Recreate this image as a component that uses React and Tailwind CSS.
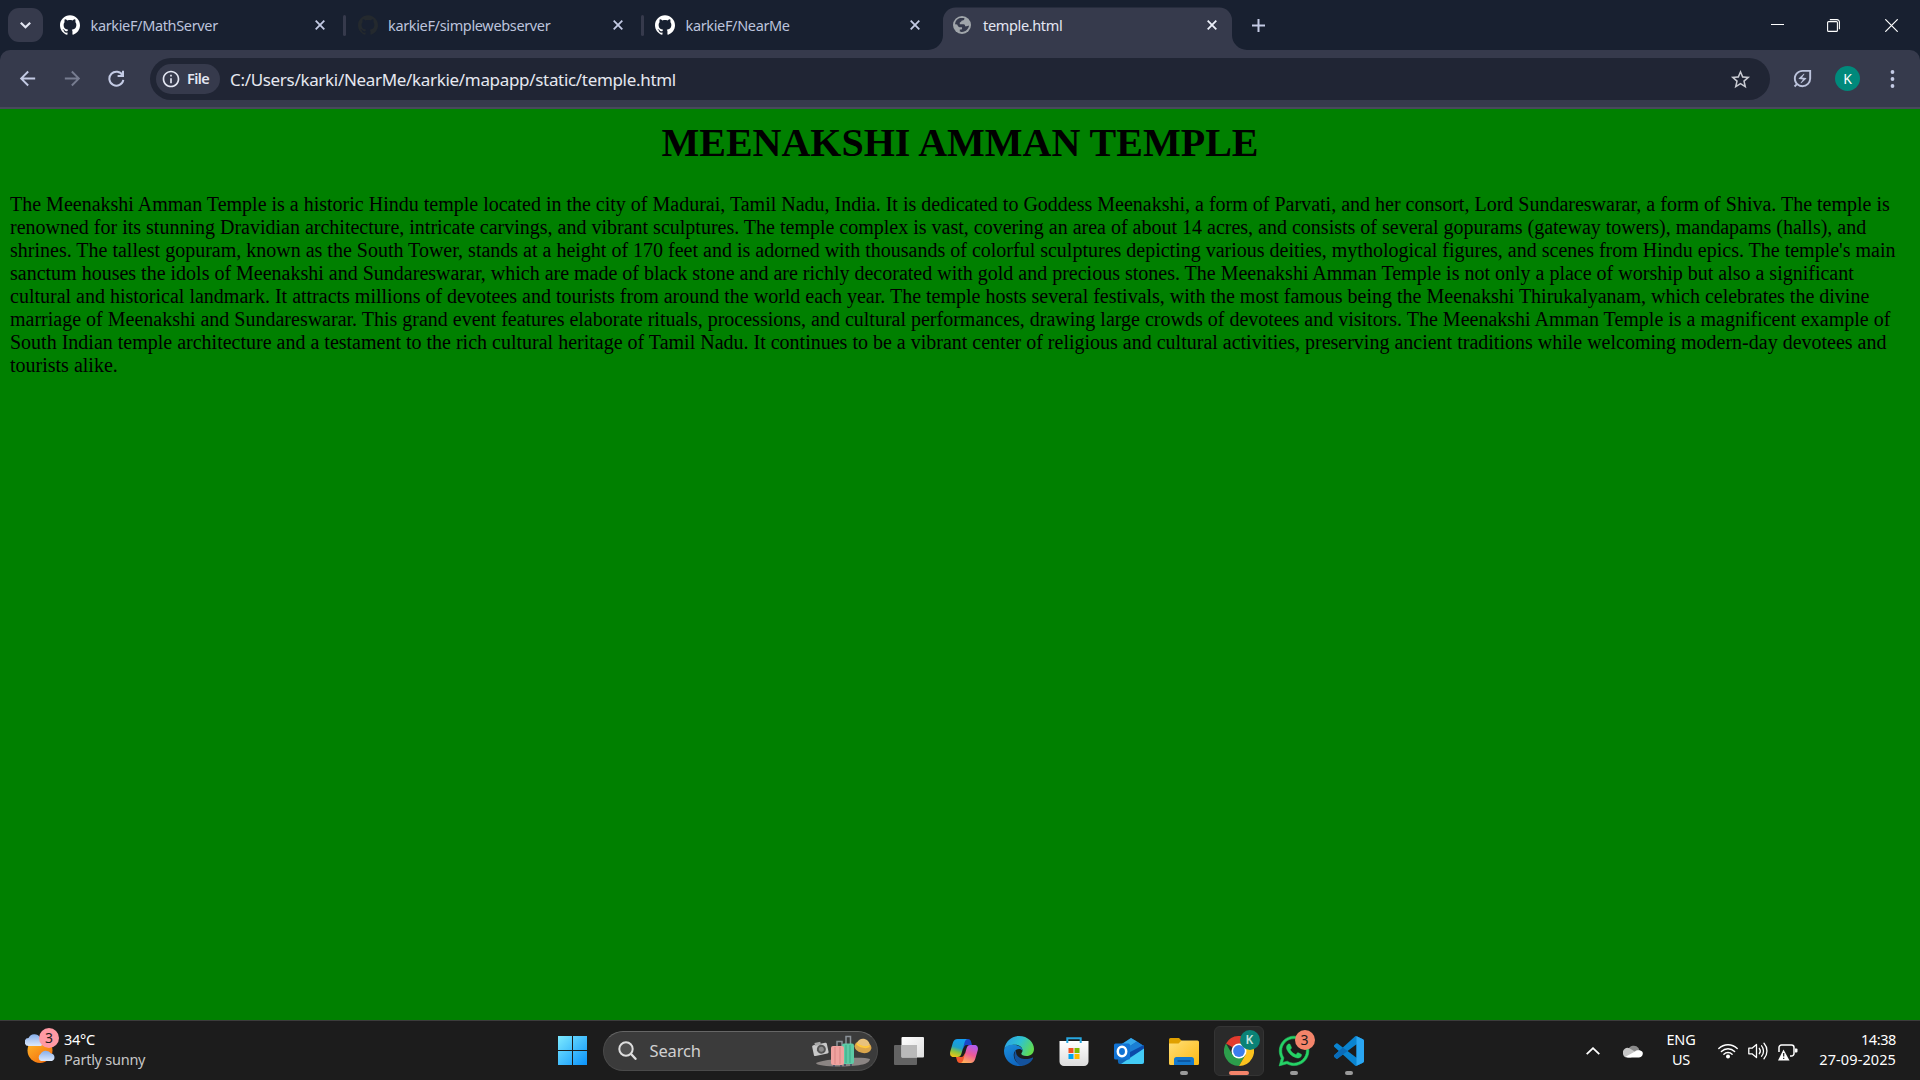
import React from "react";
import { SiGithub } from "react-icons/si";
import { FaWhatsapp } from "react-icons/fa";
import {
  MdStarBorder,
  MdArrowBack,
  MdArrowForward,
  MdInfoOutline,
  MdOutlineEnergySavingsLeaf,
} from "react-icons/md";

const PARAGRAPH =
  "The Meenakshi Amman Temple is a historic Hindu temple located in the city of Madurai, Tamil Nadu, India. It is dedicated to Goddess Meenakshi, a form of Parvati, and her consort, Lord Sundareswarar, a form of Shiva. The temple is renowned for its stunning Dravidian architecture, intricate carvings, and vibrant sculptures. The temple complex is vast, covering an area of about 14 acres, and consists of several gopurams (gateway towers), mandapams (halls), and shrines. The tallest gopuram, known as the South Tower, stands at a height of 170 feet and is adorned with thousands of colorful sculptures depicting various deities, mythological figures, and scenes from Hindu epics. The temple's main sanctum houses the idols of Meenakshi and Sundareswarar, which are made of black stone and are richly decorated with gold and precious stones. The Meenakshi Amman Temple is not only a place of worship but also a significant cultural and historical landmark. It attracts millions of devotees and tourists from around the world each year. The temple hosts several festivals, with the most famous being the Meenakshi Thirukalyanam, which celebrates the divine marriage of Meenakshi and Sundareswarar. This grand event features elaborate rituals, processions, and cultural performances, drawing large crowds of devotees and visitors. The Meenakshi Amman Temple is a magnificent example of South Indian temple architecture and a testament to the rich cultural heritage of Tamil Nadu. It continues to be a vibrant center of religious and cultural activities, preserving ancient traditions while welcoming modern-day devotees and tourists alike.";

function Cross({ className }) {
  return (
    <svg className={`h-[10px] w-[10px] shrink-0 ${className}`} viewBox="0 0 10 10" fill="none" stroke="currentColor" strokeWidth="1.800">
      <path d="M0.7 0.7 9.3 9.3M9.3 0.7 0.7 9.3" />
    </svg>
  );
}

function Tab({ title, iconClass, divider }) {
  return (
    <div className="flex h-[50px] w-[297.5px] items-center pl-[10px]">
      <SiGithub className={`h-5 w-5 shrink-0 ${iconClass}`} />
      <span className="ml-[10.5px] mt-[2px] flex-1 text-[14.5px] tracking-[-0.35px] text-[#bcc3dc]">{title}</span>
      <Cross className="text-[#c3cae4]" />
      <span className={`ml-[18px] mr-[1.5px] h-[21px] w-[3px] rounded-full ${divider ? "bg-[#363a4c]" : ""}`} />
    </div>
  );
}

function GlobeIcon() {
  return (
    <svg className="relative ml-[10px] h-[18px] w-[18px] shrink-0" viewBox="0 0 18 18">
      <circle cx="9" cy="9" r="9" fill="#a0a5aa" />
      <path d="M2 8.200C2.300 5 4.500 2.600 7 2.100C7.500 2 11 1.800 11.500 2.300C11.500 4 10.500 4.500 8.800 4.600C8.500 6 7.500 6.200 6.800 6.500V8.300H10.500C12 8.500 12.300 9.500 12 10.300C13.500 10.400 15.500 9.800 16 9.500C15.800 12.500 13 15.900 9 16C8 16 7 15.700 6.800 15.500V13.500H8.300C9.200 13.300 9.400 11.800 8.800 11.200H6.500C5 11.200 4.600 9 4.200 8.500Z" fill="#363a4c" />
    </svg>
  );
}

function ReloadIcon() {
  return (
    <svg className="ml-[24px] h-[17px] w-[17px]" viewBox="0 0 17 17" fill="none" stroke="#c3cae4" strokeWidth="2">
      <path d="M14.600 5.500A7 7 0 1 0 15.300 9.800" />
      <path d="M15 0.800V6H9.600" />
    </svg>
  );
}

function TabStrip() {
  return (
    <header className="flex h-[50px] items-center bg-[#182030]">
      <button className="ml-2 flex h-[34px] w-[35px] items-center justify-center rounded-[11px] bg-[#363a4c]">
        <svg className="h-[7px] w-[11px]" viewBox="0 0 11 7" fill="none" stroke="#e3e6f2" strokeWidth="2.2">
          <path d="M0.8 0.8 5.5 5.3 10.2 0.8" />
        </svg>
      </button>
      <div className="ml-[7px] flex">
        <Tab title="karkieF/MathServer" iconClass="text-white" divider />
        <Tab title="karkieF/simplewebserver" iconClass="text-[#24292e]" divider />
        <Tab title="karkieF/NearMe" iconClass="text-white" />
      </div>
      <div className="relative ml-[0.5px] flex h-[50px] w-[289px] items-center">
        <svg className="absolute -left-[15px] top-[7px] h-[43px] w-[319px]" viewBox="0 0 319 43">
          <path d="M0 43A15 15 0 0 0 15 28V13A12.500 12.500 0 0 1 27.500 0.500H291.500A12.500 12.500 0 0 1 304 13V28A15 15 0 0 0 319 43Z" fill="#363a4c" />
        </svg>
        <GlobeIcon />
        <span className="relative ml-[12px] mt-[2px] flex-1 text-[14.5px] tracking-[-0.35px] text-[#e3e6f2]">temple.html</span>
        <Cross className="relative mr-[15px] text-[#edf0fa]" />
      </div>
      <svg className="ml-[19.5px] h-[13px] w-[13px]" viewBox="0 0 13 13" stroke="#c3cae4" strokeWidth="2">
        <path d="M6.500 0V13M0 6.500H13" />
      </svg>
      <div className="ml-auto mr-[22px] flex items-center text-white">
        <svg className="h-[13px] w-[13px]" viewBox="0 0 13 13" stroke="currentColor">
          <path d="M0 5.500H13" />
        </svg>
        <svg className="ml-[43px] h-[13px] w-[13px]" viewBox="0 0 13 13" fill="none" stroke="currentColor" strokeWidth="1.1">
          <rect x="0.600" y="2.600" width="9.800" height="9.800" rx="1" />
          <path d="M2.800 0.600H10A2.400 2.400 0 0 1 12.400 3V10.200" />
        </svg>
        <svg className="ml-[45px] h-[13px] w-[13px]" viewBox="0 0 13 13" fill="none" stroke="currentColor" strokeWidth="1.2">
          <path d="M0.300 0.300 12.700 12.700M12.700 0.300 0.300 12.700" />
        </svg>
      </div>
    </header>
  );
}

function Toolbar() {
  return (
    <div className="h-[59px] bg-[#182030]">
      <div className="flex h-[59px] items-center rounded-t-[10px] border-b-2 border-[#484a5b] bg-[#363a4c]">
        <MdArrowBack className="ml-[16px] h-[23px] w-[23px] text-[#c3cae4]" />
        <MdArrowForward className="ml-[22px] h-[23px] w-[23px] text-[#777c90]" />
        <ReloadIcon />
        <div className="ml-[25px] mt-px flex h-[42px] w-[1620px] items-center rounded-full bg-[#202534] pl-[6px]">
          <div className="flex h-[30px] w-[64px] items-center rounded-full bg-[#363a4c] pl-[5px]">
            <MdInfoOutline className="h-5 w-5 text-[#e3e6f2]" />
            <span className="ml-[6px] text-[14.5px] font-semibold tracking-[-0.6px] text-[#e3e6f2]">File</span>
          </div>
          <span className="ml-[10px] mt-px flex-1 text-[17px] tracking-[-0.32px] text-[#e6e8f0]">
            C:/Users/karki/NearMe/karkie/mapapp/static/temple.html
          </span>
          <MdStarBorder className="mr-[18px] h-[23px] w-[23px] text-[#c9cbd2]" />
        </div>
        <MdOutlineEnergySavingsLeaf className="ml-[21px] h-[23px] w-[23px] text-[#bcc3dc]" />
        <span className="ml-[21px] flex h-[25px] w-[25px] items-center justify-center rounded-full bg-[#00897b] text-[14px] text-white">K</span>
        <svg className="ml-[30px] h-[18px] w-[5px]" viewBox="0 0 5 18" fill="#c3cae4">
          <circle cx="2.500" cy="2" r="1.900" />
          <circle cx="2.500" cy="9" r="1.900" />
          <circle cx="2.500" cy="16" r="1.900" />
        </svg>
      </div>
    </div>
  );
}

function Weather() {
  return (
    <div className="ml-[25px] flex h-full items-center">
      <svg className="h-[36px] w-[35px] -translate-y-[5px]" viewBox="0 0 35 36">
        <defs>
          <linearGradient id="sun" x1="0" y1="0" x2="0.7" y2="1">
            <stop offset="0" stopColor="#ffc02e" />
            <stop offset="1" stopColor="#f4700d" />
          </linearGradient>
          <linearGradient id="mist" x1="0" y1="0" x2="0" y2="1">
            <stop offset="0" stopColor="#86aeea" />
            <stop offset="1" stopColor="#dde9fc" />
          </linearGradient>
        </defs>
        <circle cx="15" cy="22.500" r="12.500" fill="url(#sun)" />
        <path d="M4 18A4 4 0 0 1 3.500 10A6.500 6.500 0 0 1 15 9.500 4.500 4.500 0 0 1 16 18Z" fill="url(#mist)" />
        <path d="M16 33A4 4 0 0 1 15.500 26A6 6 0 0 1 26 25.500 3.900 3.900 0 0 1 27 33Z" fill="url(#mist)" />
        <circle cx="24" cy="10" r="10" fill="#ff99a4" />
        <text x="24" y="15.200" textAnchor="middle" fontSize="14" fill="#1c1c1c">3</text>
      </svg>
      <div className="mb-[4px] ml-[4px] flex flex-col text-[14.5px] leading-[20px]">
        <span className="tracking-[-0.3px] text-white">34°C</span>
        <span className="tracking-[-0.25px] text-[#c6c6c6]">Partly sunny</span>
      </div>
    </div>
  );
}

function SearchBox() {
  return (
    <div className="ml-[15.5px] flex h-[40px] w-[275px] items-center rounded-full border border-[#4a4a4a] border-t-[#666] bg-[#3b3b3b] pl-[14px]">
      <svg className="h-[20px] w-[20px]" viewBox="0 0 20 20" fill="none" stroke="#dedede" strokeLinecap="round">
        <circle cx="8" cy="8" r="6.700" strokeWidth="2" fill="#505050" />
        <path d="M13.300 13.300 17.500 17.800" strokeWidth="2.400" />
      </svg>
      <span className="ml-[12px] mt-px flex-1 text-[16.5px] tracking-[-0.15px] text-[#d0d0d0]">Search</span>
      <svg className="mr-[5px] h-[34px] w-[60px]" viewBox="0 0 60 34">
        <path d="M4 29C12 25 50 22 58 25C57 30 50 32 28 32.500C14 32.500 4 31 4 29Z" fill="#8b8583" />
        <g transform="rotate(-12 8 16)">
          <rect x="1" y="10" width="15" height="11" rx="1.500" fill="#c9c9c9" />
          <rect x="4" y="8" width="6" height="3" fill="#a9a9a9" />
          <circle cx="9.500" cy="15.500" r="4.500" fill="#555" />
          <circle cx="9.500" cy="15.500" r="2.500" fill="#8b8b8b" />
        </g>
        <path d="M34 10V2.500H38.500V10M25 12V7.500H30V12" stroke="#8b9299" strokeWidth="1.500" fill="none" />
        <rect x="30" y="9.500" width="12" height="20.500" rx="2" fill="#5ecaa6" />
        <path d="M34 11V29M38 11V29" stroke="#3ba985" />
        <rect x="19" y="12" width="13" height="19" rx="2" fill="#f0a29f" />
        <path d="M23 13V30M28 13V30" stroke="#d88583" />
        <path d="M22 31V33M29 31V33M33 30V32M39 30V32" stroke="#3c4660" strokeWidth="1.500" />
        <g transform="rotate(12 51 13)">
          <ellipse cx="51" cy="13" rx="8.500" ry="6" fill="#dba64c" />
          <path d="M44.500 10C45 3 56 3 57 10C54 13 48 13 44.500 10Z" fill="#e8c27e" />
          <path d="M44.300 10C48 12.500 54 12.500 57.200 10L57.500 12C54 14.500 48 14.500 44 12Z" fill="#ffc93c" />
        </g>
      </svg>
    </div>
  );
}

function TaskViewIcon() {
  return (
    <svg className="h-[30px] w-[30px]" viewBox="0 0 30 30">
      <defs>
        <linearGradient id="tv" x1="0" y1="0" x2="1" y2="1">
          <stop offset="0" stopColor="#ffffff" />
          <stop offset="1" stopColor="#dedede" />
        </linearGradient>
      </defs>
      <rect x="0" y="9" width="23" height="20" rx="1" fill="#636363" />
      <rect x="7.500" y="1" width="22.500" height="20.500" rx="1" fill="url(#tv)" />
      <path d="M7.500 9H23V21.500H7.500Z" fill="#b9b9b9" />
    </svg>
  );
}

function CopilotIcon() {
  return (
    <svg className="h-[30px] w-[30px]" viewBox="0 0 30 30">
      <defs>
        <linearGradient id="cpA" x1="0.5" y1="0" x2="0.2" y2="1">
          <stop offset="0" stopColor="#149df0" />
          <stop offset="0.45" stopColor="#1f9fc8" />
          <stop offset="0.7" stopColor="#8bc53f" />
          <stop offset="1" stopColor="#f6c515" />
        </linearGradient>
        <linearGradient id="cpB" x1="0.7" y1="0" x2="0.3" y2="1">
          <stop offset="0" stopColor="#b05cf0" />
          <stop offset="0.5" stopColor="#ee5a96" />
          <stop offset="1" stopColor="#ffb05a" />
        </linearGradient>
      </defs>
      <path d="M13 3H19C21 3 21.800 4.500 22.300 6.500L23 9H18C15.500 9 15 11 14.300 13Z" fill="#1846c8" />
      <path d="M17 27H11C9 27 8.200 25.500 7.700 23.500L7 21H12C14.500 21 15 19 15.700 17Z" fill="#f2582c" />
      <path d="M8.500 3H18.500C16.500 3.500 16 5 15.300 7.500L12.500 17.500C11.800 20 10.800 21 8.500 21H4.500C1.500 21 0.500 18.500 1.300 15.500L3.800 7C4.700 4.300 6 3 8.500 3Z" fill="url(#cpA)" />
      <path d="M21.500 27H11.500C13.500 26.500 14 25 14.700 22.500L17.500 12.500C18.200 10 19.200 9 21.500 9H25.500C28.500 9 29.500 11.500 28.700 14.500L26.200 23C25.300 25.700 24 27 21.500 27Z" fill="url(#cpB)" />
    </svg>
  );
}

function EdgeIcon() {
  return (
    <svg className="h-[30px] w-[30px]" viewBox="0 0 30 30">
      <defs>
        <linearGradient id="edTop" x1="0" y1="0.2" x2="1" y2="0.6">
          <stop offset="0" stopColor="#2b9fe6" />
          <stop offset="0.5" stopColor="#2fc3d0" />
          <stop offset="1" stopColor="#62dc4c" />
        </linearGradient>
        <linearGradient id="edLeft" x1="0" y1="0" x2="0.5" y2="1">
          <stop offset="0" stopColor="#1b8fdc" />
          <stop offset="1" stopColor="#0f66bf" />
        </linearGradient>
      </defs>
      <path d="M0.300 13C1.500 5.500 7.500 0 15 0C24 0 30 6.500 30 13C30 17.500 26.500 20 22.500 20C19 20 17.300 18.900 17.300 17.800C17.300 17 18.500 16.400 18.500 14.500C18.500 11.500 15.500 8.800 11 8.800C5.500 8.800 1.500 11 0.300 13Z" fill="url(#edTop)" />
      <path d="M0 15C0 10.500 5 8.300 10 8.800C15.500 9.300 18.500 12 18.500 14.500C16.500 11.800 11.500 12.500 10 17C8.500 22.500 13 28.500 19 29.400C17.800 29.800 16.400 30 15 30C6.700 30 0 23.300 0 15Z" fill="url(#edLeft)" />
      <path d="M12 14C9 18.500 10 24.500 16 29.800C21 30 26.500 27.300 29 22.400C29.300 21.700 28.800 21.400 28.200 21.700C23 24 15 23.500 12.600 18.500C12 17 11.900 15.500 12 14Z" fill="#14529c" />
    </svg>
  );
}

function StoreIcon() {
  return (
    <svg className="h-[30px] w-[30px]" viewBox="0 0 30 30">
      <defs>
        <linearGradient id="bag" x1="0" y1="0" x2="0" y2="1">
          <stop offset="0" stopColor="#ffffff" />
          <stop offset="1" stopColor="#dcdcdc" />
        </linearGradient>
      </defs>
      <path d="M0.500 5H29.500V25.500A4.500 4.500 0 0 1 25 30H5A4.500 4.500 0 0 1 0.500 25.500Z" fill="url(#bag)" />
      <path d="M8.300 7V2.300H21.700V7" fill="none" stroke="#27a7e0" strokeWidth="2" />
      <rect x="9.500" y="12" width="5" height="5" fill="#f25022" />
      <rect x="15.500" y="12" width="5" height="5" fill="#7fba00" />
      <rect x="9.500" y="18" width="5" height="5" fill="#00a4ef" />
      <rect x="15.500" y="18" width="5" height="5" fill="#ffb900" />
    </svg>
  );
}

function OutlookIcon() {
  return (
    <svg className="h-[30px] w-[30px]" viewBox="0 0 30 30">
      <path d="M3 11 17 2 30 10V26A2 2 0 0 1 28 28H6A2 2 0 0 1 4 26Z" fill="#1066b5" />
      <path d="M5 10 17 2 23 5.500 8 15Z" fill="#35a8ea" />
      <path d="M23 5.500 29 9.500 14 19 8 15Z" fill="#1b7fd4" />
      <path d="M30 9V14L14 22V17Z" fill="#0b4aa8" />
      <path d="M30 12.500V25.500A2.500 2.500 0 0 1 27.500 28H7Z" fill="#43cbf5" />
      <rect x="0" y="7.500" width="16" height="16" rx="1.500" fill="#1173d4" />
      <ellipse cx="8" cy="15.500" rx="4.200" ry="4.700" fill="none" stroke="#fff" strokeWidth="2.500" />
    </svg>
  );
}

function FolderIcon() {
  return (
    <svg className="h-[30px] w-[30px]" viewBox="0 0 30 30">
      <defs>
        <linearGradient id="fold" x1="0" y1="0" x2="1" y2="1">
          <stop offset="0" stopColor="#ffdf78" />
          <stop offset="1" stopColor="#fcb912" />
        </linearGradient>
      </defs>
      <path d="M0 3.500A1.500 1.500 0 0 1 1.500 2H10L13 5V10H0Z" fill="#e0a000" />
      <path d="M0 7.500H9.500L12.500 4.500H28.500A1.500 1.500 0 0 1 30 6V27.500A1.500 1.500 0 0 1 28.500 29H1.500A1.500 1.500 0 0 1 0 27.500Z" fill="url(#fold)" />
      <path d="M5 29V23.500A2.500 2.500 0 0 1 7.500 21H22.500A2.500 2.500 0 0 1 25 23.500V29Z" fill="#1278cd" />
      <path d="M8.500 25H21.500" stroke="#0b4f96" strokeWidth="1.500" />
    </svg>
  );
}

function ChromeIcon() {
  return (
    <svg className="h-[30px] w-[30px]" viewBox="0 0 30 30">
      <path d="M15 15 2 7.500A15 15 0 0 1 28 7.500H15Z" fill="#e33b2e" />
      <path d="M15 15 8.500 18.700 2 7.500A15 15 0 0 0 15 30L21.500 18.800Z" fill="#2c9e4b" />
      <path d="M15 7.500H28A15 15 0 0 1 15 30L21.500 18.800Z" fill="#fcc31e" />
      <circle cx="15" cy="15" r="7.500" fill="#fff" />
      <circle cx="15" cy="15" r="5.900" fill="#3b7ded" />
    </svg>
  );
}

function VsCodeIcon() {
  return (
    <svg className="h-[30px] w-[30px]" viewBox="0 0 24 24">
      <path
        d="M23.150 2.587L18.210.210a1.494 1.494 0 0 0-1.705.290l-9.460 8.630-4.120-3.128a.999.999 0 0 0-1.276.057L.327 7.261A1 1 0 0 0 .326 8.740L3.899 12 .326 15.260a1 1 0 0 0 .001 1.479L1.650 17.940a.999.999 0 0 0 1.276.057l4.120-3.128 9.460 8.630a1.492 1.492 0 0 0 1.704.290l4.942-2.377A1.500 1.500 0 0 0 24 20.060V3.939a1.500 1.500 0 0 0-.850-1.352zm-5.146 14.861L10.826 12l7.178-5.448v10.896z"
        fill="#0a84d0"
      />
      <path d="M7.046 9.130 3.899 12 .326 15.260a1 1 0 0 0 .001 1.479L1.650 17.940a.999.999 0 0 0 1.276.057L10.826 12Z" fill="#0a6cb8" />
      <path d="M18 .150 23.150 2.587A1.500 1.500 0 0 1 24 3.939V20.060A1.500 1.500 0 0 1 23.150 21.410L18 23.850Z" fill="#2aa6f2" />
    </svg>
  );
}

function AppCell({ children, active, running, badge, badgeClass }) {
  return (
    <div className="relative flex h-[50px] w-[55px] items-center justify-center">
      <div className={`flex h-[50px] w-[50px] items-center justify-center rounded-[6px] ${active ? "border border-[#343434] bg-[#2a2a2a]" : ""}`}>
        {children}
      </div>
      {badge && (
        <span className={`absolute left-[28.5px] top-[4px] flex h-[20px] w-[20px] items-center justify-center rounded-full leading-none ${badgeClass}`}>
          {badge}
        </span>
      )}
      {active && <span className="absolute bottom-[1px] left-[17.5px] h-[4px] w-[20px] rounded-full bg-[#f4846a]" />}
      {running && <span className="absolute bottom-[1px] left-[23.5px] h-[4px] w-[8px] rounded-full bg-[#9a9a9a]" />}
    </div>
  );
}

function Tray() {
  return (
    <div className="ml-auto mr-[24px] flex h-full items-center text-[14.5px] leading-[20px] text-white">
      <svg className="h-[8px] w-[14px]" viewBox="0 0 14 8" fill="none" stroke="currentColor" strokeWidth="1.800">
        <path d="M0.700 7.200 7 1.200 13.300 7.200" />
      </svg>
      <svg className="ml-[23px] h-[14px] w-[20px]" viewBox="0 0 20 14">
        <path d="M5 6A6 6 0 0 1 15.500 4L17 8 8 9Z" fill="#8b8b8b" />
        <path d="M4 13.500A4 4 0 0 1 0 9A4.500 4.500 0 0 1 6.500 4.300L14 9 8 13.500Z" fill="#c6c6c6" />
        <path d="M2.500 12.700 12 7.500C13 6 18 5.500 19.500 8A4 4 0 0 1 16 13.500H5Z" fill="#fff" />
      </svg>
      <div className="mb-[4px] ml-[22px] flex w-[32px] flex-col items-center tracking-[-0.2px]">
        <span>ENG</span>
        <span>US</span>
      </div>
      <svg className="ml-[21px] h-[16px] w-[20px]" viewBox="0 0 20 16" fill="none" stroke="currentColor" strokeWidth="1.400" strokeLinecap="round">
        <path d="M0.800 5.600A13 13 0 0 1 19.200 5.600M3.400 8.500A9.300 9.300 0 0 1 16.600 8.500M5.900 11.200A5.800 5.800 0 0 1 14.100 11.200" />
        <circle cx="10" cy="13.600" r="1.300" fill="currentColor" />
      </svg>
      <svg className="ml-[10px] h-[18px] w-[20px]" viewBox="0 0 20 18" fill="none" stroke="currentColor" strokeWidth="1.300" strokeLinecap="round" strokeLinejoin="round">
        <path d="M0.800 6.200V11.800H4L8.500 15.500V2.500L4 6.200ZM11.300 6.300A4.500 4.500 0 0 1 11.300 11.700M13.600 3.800A8 8 0 0 1 13.600 14.200M16 1.300A11.500 11.500 0 0 1 16 16.700" />
      </svg>
      <svg className="ml-[10px] h-[18px] w-[20px] translate-y-px" viewBox="0 0 20 18" fill="none" stroke="currentColor" strokeWidth="1.500">
        <path d="M1 9V4.500A2.500 2.500 0 0 1 3.500 2H13.500A2.500 2.500 0 0 1 16 4.500V10.500A2.500 2.500 0 0 1 13.500 13H12" />
        <path d="M17 5.500H18.500A1 1 0 0 1 19.500 6.500V8.500A1 1 0 0 1 18.500 9.500H17Z" fill="currentColor" stroke="none" />
        <path d="M5.500 6.500 11.500 17.500H0Z" fill="currentColor" stroke="none" />
        <path d="M5.700 10V13.500M5.700 14.700V16" stroke="#1c1c1c" strokeWidth="1.200" />
      </svg>
      <div className="mb-[4px] ml-[20px] flex w-[78px] flex-col items-end whitespace-nowrap">
        <span className="tracking-[-0.4px]">14:38</span>
        <span className="tracking-[0.1px]">27-09-2025</span>
      </div>
    </div>
  );
}

function Taskbar() {
  return (
    <footer className="flex h-[60px] items-center border-t border-[#3c3c3c] bg-[#1c1c1c]">
      <div className="h-full w-[558px]">
        <Weather />
      </div>
      <svg className="h-[29px] w-[29px] shrink-0" viewBox="0 0 29 29">
        <defs>
          <linearGradient id="win" gradientUnits="userSpaceOnUse" x1="0" y1="0" x2="29" y2="29">
            <stop offset="0" stopColor="#7deaff" />
            <stop offset="1" stopColor="#0a93fb" />
          </linearGradient>
        </defs>
        <path d="M0 0H14V14H0ZM15 0H29V14H15ZM0 15H14V29H0ZM15 15H29V29H15Z" fill="url(#win)" />
      </svg>
      <SearchBox />
      <div className="ml-[3.500px] flex">
        <AppCell><TaskViewIcon /></AppCell>
        <AppCell><CopilotIcon /></AppCell>
        <AppCell><EdgeIcon /></AppCell>
        <AppCell><StoreIcon /></AppCell>
        <AppCell><OutlookIcon /></AppCell>
        <AppCell running><FolderIcon /></AppCell>
        <AppCell active badge="K" badgeClass="bg-[#0b8276] text-[12px] font-semibold text-[#c5e3df]"><ChromeIcon /></AppCell>
        <AppCell running badge="3" badgeClass="bg-[#f4846a] text-[14px] text-[#1c1c1c]">
          <FaWhatsapp className="h-[34px] w-[34px] stroke-[#25d366] stroke-[8] text-[#25d366]" />
        </AppCell>
        <AppCell running><VsCodeIcon /></AppCell>
      </div>
      <Tray />
    </footer>
  );
}

export default function App() {
  return (
    <div className="flex h-[1080px] w-[1920px] flex-col overflow-hidden font-['Noto_Sans',sans-serif]">
      <TabStrip />
      <Toolbar />
      <main className="flex-1 bg-[#008000] px-[10px] font-['Liberation_Serif',serif] text-black">
        <h1 className="pt-[11px] text-center text-[40px] font-bold leading-[46px]">MEENAKSHI AMMAN TEMPLE</h1>
        <p className="mt-[27px] text-[20px] leading-[23px]">{PARAGRAPH}</p>
      </main>
      <Taskbar />
    </div>
  );
}
